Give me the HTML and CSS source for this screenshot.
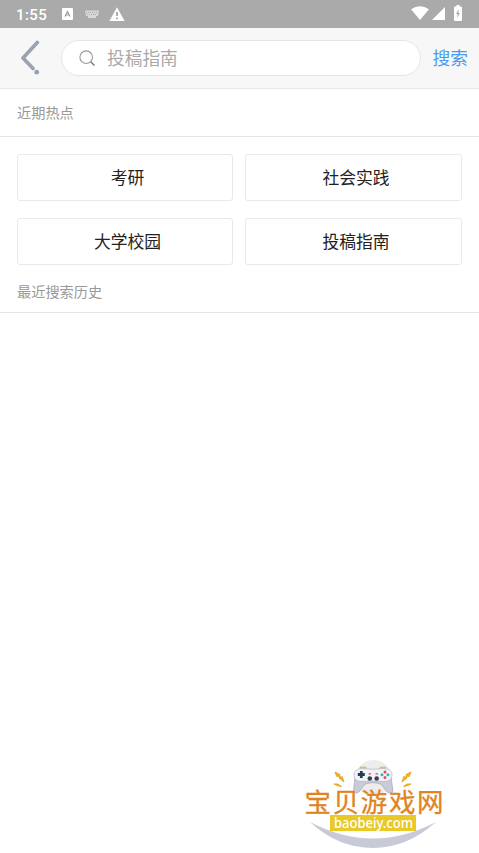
FILE: index.html
```html
<!DOCTYPE html>
<html lang="zh-CN">
<head>
<meta charset="utf-8">
<title>搜索</title>
<link rel="stylesheet" href="styles.css">
</head>
<body>
<div class="screen">
  <div class="status">
    <span class="clock">1:55</span>
    <svg class="status-app" width="11" height="12" viewBox="0 0 11 12"><rect width="11" height="12" rx="1" fill="#fff"/><path d="M3 8.500 5.500 3.500 8 8.500M4.500 7h2" fill="none" stroke="#999" stroke-width="1.200"/></svg>
    <svg class="status-keys" width="14" height="8" viewBox="0 0 14 8"><path d="M0 .5h14L13 6h-2v2H3V6H1z" fill="#d8d8d8"/><path d="M1 2.500h12M2 4.500h10" stroke="#aaa" stroke-dasharray="1 1"/></svg>
    <svg class="status-warn" width="16" height="14" viewBox="0 0 16 14"><path d="M8 .3 15.600 14H.4z" fill="#fff"/><path d="M8 5v4M8 10.500v1.700" stroke="#999" stroke-width="1.600"/></svg>
    <svg class="status-wifi" width="18" height="14" viewBox="0 0 18 14"><path d="M0 3.300Q9-3 18 3.300L9 14z" fill="#fff"/></svg>
    <svg class="status-signal" width="13" height="13" viewBox="0 0 13 13"><path d="M13 0v13H0z" fill="#fff"/></svg>
    <svg class="status-battery" width="8" height="16" viewBox="0 0 8 16"><path d="M2.500 0h3v1.500H7q1 0 1 1V15q0 1-1 1H1q-1 0-1-1V2.500q0-1 1-1h1.500z" fill="#fff"/><path d="M4.800 4 2 9h1.700L3.200 13 6 8H4.300z" fill="#aaa"/></svg>
  </div>
  <header class="header">
    <svg class="back" width="20" height="36" viewBox="0 0 20 36"><path d="M17.300 2.500 3 18 13 28.500" fill="none" stroke="#9aa3b1" stroke-width="3.700" stroke-linecap="round" stroke-linejoin="round"/><circle cx="16.700" cy="32.200" r="2.400" fill="#9aa3b1"/></svg>
    <div class="field">
      <svg width="17" height="17" viewBox="0 0 17 17"><circle cx="7.200" cy="7.200" r="6.300" fill="none" stroke="#999" stroke-width="1.100"/><path d="m11.700 11.700 3.800 3.800" stroke="#777" stroke-width="1.300"/></svg>
      <span>投稿指南</span>
    </div>
    <a class="submit">搜索</a>
  </header>
  <h2 class="heading">近期热点</h2>
  <div class="topics">
    <div class="topic">考研</div>
    <div class="topic">社会实践</div>
    <div class="topic">大学校园</div>
    <div class="topic">投稿指南</div>
  </div>
  <h2 class="heading history">最近搜索历史</h2>
  <svg class="brand" width="160" height="103" viewBox="0 0 160 103">
    <circle cx="78.500" cy="28" r="18" fill="#ededee"/>
    <path d="M65 18.500v-1.500h6v1.500M85 18.500v-1.500h6v1.500" fill="#edc35c" stroke="#dfb04a" stroke-width=".6"/>
    <path d="M60 27 58.500 41Q60 44.500 64 42L70 34Q78 31 86 34L92 42Q97 44.500 98 41L96 27z" fill="#c9cbd6" stroke="#a5a8b8" stroke-width=".7"/>
    <path d="M67 18.500Q78 20 89 18.500 97 19 97 25q0 6-7 6.500-12-1-24 0-7-.5-7-6.500 0-6 8-6.500z" fill="#f3f3f6" stroke="#b3b5c3" stroke-width=".7"/>
    <path d="M66.300 21v7M62.800 24.500h7" stroke="#233e50" stroke-width="2.800"/>
    <g fill="#e04f57"><circle cx="90" cy="22" r="1.500"/><circle cx="90" cy="27.500" r="1.500"/></g>
    <g fill="#35aecb"><circle cx="87" cy="24.800" r="1.500"/><circle cx="93" cy="24.800" r="1.500"/></g>
    <g fill="#344352"><circle cx="74.800" cy="28.500" r="2.300"/><circle cx="81.700" cy="28.500" r="2.300"/></g>
    <path d="M73.500 23.800h2.500M80.500 23.800h2.500" stroke="#d94561" stroke-width="1.300"/>
    <path d="M40 22l5 2.500-.3 2.500 2.600-.3L49 32l-5-4 .3-2-2.600.5zM39 34l4 0 3.500 2.500-4-.8zM116 22l-5 2.500.3 2.500-2.600-.3L107 32l5-4-.3-2 2.600.5zM116 34l-4 0-3.500 2.500 4-.8z" fill="#f2b51d" stroke="#e7a622" stroke-width=".9" stroke-linejoin="round"/>
    <path d="M15 72Q78 105 141 72Q112 98 78 98Q43 98 15 72z" fill="#c8cad7"/>
    <rect x="35" y="65" width="86" height="16" fill="#e8c927"/>
    <text class="brand-name" x="9.500" y="61.500" textLength="139">宝贝游戏网</text>
    <text class="brand-url" x="39" y="77.500" textLength="79" lengthAdjust="spacingAndGlyphs">baobeiy.com</text>
  </svg>
</div>
</body>
</html>
```
FILE: styles.css
```css
* { box-sizing: border-box; }
body {
  margin: 0;
  background: #fff;
  font-family: Roboto, "Noto Sans CJK SC", sans-serif;
}
.screen {
  position: relative;
  height: 853px;
  overflow: hidden;
}
svg { display: block; flex: none; }
.status {
  display: flex;
  align-items: center;
  height: 28px;
  padding: 0 17px 2px 16px;
  background: #aaa;
}
.clock {
  width: 46px;
  padding-top: 3px;
  color: #fff;
  font-size: 15px;
  line-height: 20px;
  font-weight: 500;
  letter-spacing: .4px;
}
.status-app { margin-top: 2px; }
.status-keys { margin: 2px 0 0 12px; }
.status-warn { margin: 2px 0 0 10px; }
.status-wifi { margin-left: auto; }
.status-signal { margin: 1px 0 0 3px; }
.status-battery { margin-left: 9px; }
.header {
  display: flex;
  align-items: center;
  height: 61px;
  padding: 0 11px 0 20px;
  background: #f7f7f7;
  border-bottom: 1px solid #e8e8e8;
}
.field {
  display: flex;
  align-items: center;
  gap: 11px;
  width: 360px;
  height: 36px;
  margin-left: 21px;
  padding-left: 17px;
  background: #fff;
  border: 1px solid #e6e6e6;
  border-radius: 18px;
  color: #aaa;
  font-size: 17.700px;
  line-height: 26px;
}
.field span { padding-top: 2px; }
.submit {
  margin-left: auto;
  padding-top: 2px;
  color: #4a9af0;
  font-size: 17.700px;
  line-height: 26px;
}
.heading {
  height: 48px;
  margin: 0;
  padding-left: 17px;
  border-bottom: 1px solid #e5e5e5;
  color: #999;
  font-size: 14.200px;
  font-weight: 400;
  line-height: 48px;
}
.history { line-height: 54px; }
.topics {
  display: grid;
  grid-template-columns: 216px 217px;
  gap: 17px 12px;
  padding: 17px 17px 0;
}
.topic {
  height: 47px;
  border: 1px solid #e9e9e9;
  border-radius: 3px;
  color: #222;
  font-size: 16.800px;
  line-height: 47px;
  text-align: center;
  padding-left: 5px;
}
.brand {
  position: absolute;
  left: 295px;
  top: 750px;
}
.brand-name {
  fill: #df8420;
  font-family: "Noto Sans CJK SC", sans-serif;
  font-size: 26.500px;
  font-weight: 400;
  stroke: #df8420;
  stroke-width: .3px;
}
.brand-url {
  fill: #fff;
  font-family: "Noto Sans", sans-serif;
  font-size: 14px;
  font-weight: 500;
}
```
